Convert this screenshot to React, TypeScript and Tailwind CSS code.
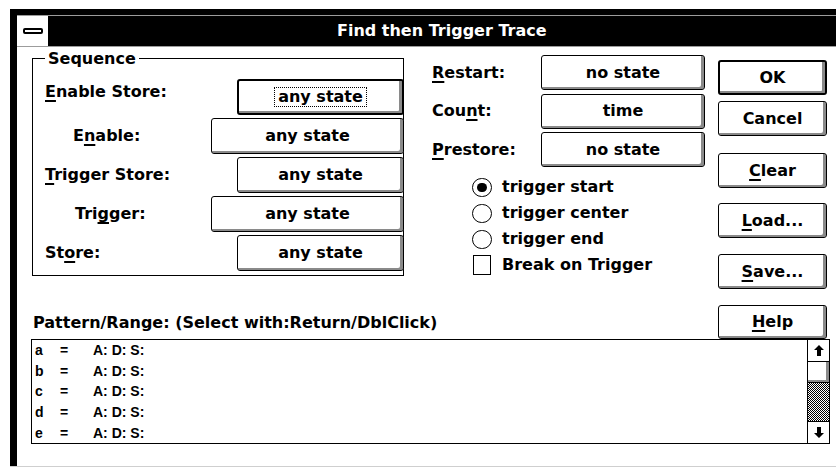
import React from "react";

const dither =
  "bg-[image:repeating-conic-gradient(#000_0%_25%,#fff_0%_50%)] bg-size-[2px_2px]";

function Btn({
  children,
  className = "",
  def = false,
}: {
  children: React.ReactNode;
  className?: string;
  def?: boolean;
}) {
  return (
    <div
      className={`flex items-center justify-center bg-white rounded-[3px] border-black shadow-[inset_-3px_-2px_0_#8a8a8a] ${
        def ? "border-2" : "border"
      } ${className}`}
    >
      {children}
    </div>
  );
}

function U({ children }: { children: React.ReactNode }) {
  return (
    <span className="underline decoration-2 underline-offset-[3px]">
      {children}
    </span>
  );
}

function SeqRow({
  label,
  labelPad,
  btnW,
  focused = false,
  labelUp = false,
}: {
  label: React.ReactNode;
  labelPad: string;
  btnW: string;
  focused?: boolean;
  labelUp?: boolean;
}) {
  return (
    <div className="flex items-center justify-between h-[36px]">
      <div className={`${labelPad} ${labelUp ? "mb-[10px]" : ""}`}>{label}</div>
      <Btn className={`${btnW} h-[36px]`} def={focused}>
        {focused ? (
          <span className="border border-dotted border-black px-[3px] h-[20px] flex items-center">
            any state
          </span>
        ) : (
          "any state"
        )}
      </Btn>
    </div>
  );
}

function Radio({ checked, label }: { checked?: boolean; label: string }) {
  return (
    <div className="flex items-center h-[26px] pl-[40px]">
      <div className="w-[20px] h-[19px] rounded-full border-[1.5px] border-black flex items-center justify-center">
        {checked && <div className="w-[10px] h-[9px] rounded-full bg-black" />}
      </div>
      <span className="ml-[10px]">{label}</span>
    </div>
  );
}

function Arrow({ down = false }: { down?: boolean }) {
  return (
    <svg width="10" height="11" viewBox="0 0 10 11">
      <polygon
        points="5,0 10,5 7,5 7,11 3,11 3,5 0,5"
        fill="#000"
        transform={down ? "rotate(180 5 5.5)" : undefined}
      />
    </svg>
  );
}

export default function App() {
  const rows = ["a", "b", "c", "d", "e"];
  return (
    <div className="w-[836px] h-[468px] overflow-hidden bg-white pt-[9px] pl-[10px] font-['DejaVu_Sans',sans-serif] font-bold text-[16px] leading-[16px] text-black">
      <div className="w-[900px] h-[457px] border-l-[7px] border-t-[6px] border-black flex flex-col">
        <div className="h-px bg-[#9c9c9c]" />
        <div className="h-[30px] flex bg-black">
          <div className="w-[31px] bg-white flex items-center justify-center">
            <div className="w-[20px] h-[6px] border-2 border-black rounded-[2px] bg-white" />
          </div>
          <div className="flex-1 flex items-center pl-[289px] text-white">
            Find then Trigger Trace
          </div>
        </div>
        <div className="h-px bg-[#9c9c9c]" />
        <div className="flex-1 bg-white flex flex-col">
          <div className="flex">
            <div className="w-[701px] flex flex-col">
              <div className="h-[268px] flex items-start">
                {/* Sequence group box */}
                <div className="relative ml-[15px] mt-[11px] w-[372px] h-[218px] border border-black">
                  <div className="absolute top-[-8px] left-[12px] bg-white px-[3px] h-[16px]">
                    Sequence
                  </div>
                  <div className="flex flex-col gap-[3px] pt-[20px] -mr-px">
                    <SeqRow
                      label={
                        <>
                          <U>E</U>nable Store:
                        </>
                      }
                      labelPad="pl-[12px]"
                      btnW="w-[167px]"
                      focused
                      labelUp
                    />
                    <SeqRow
                      label={
                        <>
                          E<U>n</U>able:
                        </>
                      }
                      labelPad="pl-[40px]"
                      btnW="w-[193px]"
                    />
                    <SeqRow
                      label={
                        <>
                          <U>T</U>rigger Store:
                        </>
                      }
                      labelPad="pl-[12px]"
                      btnW="w-[167px]"
                    />
                    <SeqRow
                      label={
                        <>
                          Tri<U>g</U>ger:
                        </>
                      }
                      labelPad="pl-[42px]"
                      btnW="w-[193px]"
                    />
                    <SeqRow
                      label={
                        <>
                          St<U>o</U>re:
                        </>
                      }
                      labelPad="pl-[12px]"
                      btnW="w-[167px]"
                    />
                  </div>
                </div>

                {/* middle column */}
                <div className="ml-[28px] mt-[8px] w-[273px] flex flex-col">
                  <div className="flex flex-col gap-[3.5px]">
                    <div className="flex items-center h-[35px]">
                      <div className="w-[109px]">
                        <U>R</U>estart:
                      </div>
                      <Btn className="w-[164px] h-[35px]">no state</Btn>
                    </div>
                    <div className="flex items-center h-[35px]">
                      <div className="w-[109px]">
                        Cou<U>n</U>t:
                      </div>
                      <Btn className="w-[164px] h-[35px]">time</Btn>
                    </div>
                    <div className="flex items-center h-[35px]">
                      <div className="w-[109px]">
                        <U>P</U>restore:
                      </div>
                      <Btn className="w-[164px] h-[35px]">no state</Btn>
                    </div>
                  </div>
                  <div className="mt-[7px] flex flex-col">
                    <Radio checked label="trigger start" />
                    <Radio label="trigger center" />
                    <Radio label="trigger end" />
                    <div className="flex items-center h-[26px] pl-[41px]">
                      <div className="w-[18px] h-[20px] border-[1.5px] border-black" />
                      <span className="ml-[11px]">Break on Trigger</span>
                    </div>
                  </div>
                </div>
              </div>
              <div className="ml-[16px] h-[16px] whitespace-nowrap">
                Pattern/Range: (Select with:Return/DblClick)
              </div>
            </div>

            {/* right buttons */}
            <div className="w-[109px] flex flex-col pt-[13px]">
              <Btn className="h-[35px]" def>
                OK
              </Btn>
              <Btn className="h-[35px] mt-[6px]">Cancel</Btn>
              <Btn className="h-[35px] mt-[17px]">
                <span>
                  <U>C</U>lear
                </span>
              </Btn>
              <Btn className="h-[35px] mt-[15px]">
                <span>
                  <U>L</U>oad...
                </span>
              </Btn>
              <Btn className="h-[35px] mt-[16px]">
                <span>
                  <U>S</U>ave...
                </span>
              </Btn>
              <Btn className="h-[34px] mt-[16px]">
                <span>
                  <U>H</U>elp
                </span>
              </Btn>
            </div>
          </div>

          {/* list box */}
          <div className="ml-[14px] w-[799px] h-[105px] border border-black flex">
            <div className="flex-1 flex flex-col font-['Liberation_Sans',sans-serif] text-[14px] leading-[14px]">
              {rows.map((r) => (
                <div key={r} className="h-[20.6px] flex items-center pl-[3px]">
                  <span className="w-[25px]">{r}</span>
                  <span className="w-[33px]">=</span>
                  <span className="whitespace-pre">A: D: S:</span>
                </div>
              ))}
            </div>
            <div className="w-[22px] border-l border-black flex flex-col">
              <div className="h-[22px] border-b border-black flex items-center justify-center">
                <Arrow />
              </div>
              <div className="h-[21px] bg-white shadow-[inset_-3px_-2px_0_#8a8a8a] border-b border-black" />
              <div className={`flex-1 ${dither}`} />
              <div className="h-[22px] border-t border-black flex items-center justify-center">
                <Arrow down />
              </div>
            </div>
          </div>
        </div>
      </div>
      <div className="h-px bg-[#cfcfcf]" />
    </div>
  );
}
